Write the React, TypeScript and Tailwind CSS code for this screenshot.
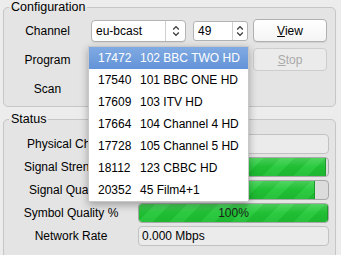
import React from "react";

function UpDown({ className = "" }: { className?: string }) {
  return (
    <svg width="8" height="12" viewBox="0 0 8 12" className={className}>
      <path d="M1.2 4.5 L4 1.7 L6.8 4.5" fill="none" stroke="#333" strokeWidth="1.2" />
      <path d="M1.2 7.5 L4 10.3 L6.8 7.5" fill="none" stroke="#333" strokeWidth="1.2" />
    </svg>
  );
}

const rows: [string, string][] = [
  ["17472", "102 BBC TWO HD"],
  ["17540", "101 BBC ONE HD"],
  ["17609", "103 ITV HD"],
  ["17664", "104 Channel 4 HD"],
  ["17728", "105 Channel 5 HD"],
  ["18112", "123 CBBC HD"],
  ["20352", "45 Film4+1"],
];

function Bar({ pct, label }: { pct: number; label?: string }) {
  return (
    <div className="relative h-[20px] w-[191px] rounded-[4px] border border-[#a8a8a8] bg-[#dcdcdc] overflow-hidden">
      <div
        className="h-full rounded-l-[3px] border-r border-[#1d9a2b] bg-[linear-gradient(180deg,rgba(255,255,255,0.18)_0%,rgba(255,255,255,0)_50%,rgba(0,0,0,0.05)_100%),repeating-linear-gradient(135deg,#1fbf33_0px,#1fbf33_12px,#2bcb40_12px,#2bcb40_22px)]"
        style={{ width: `${pct}%` }}
      />
      {label && (
        <div className="absolute inset-0 flex items-center justify-center text-[12px] text-[#1c1c1c]">{label}</div>
      )}
    </div>
  );
}

export default function App() {
  return (
    <div className="relative w-[341px] h-[255px] overflow-hidden bg-[#ececec] text-[12px] text-black font-['Liberation_Sans',Arial,sans-serif]">
      <fieldset className="ml-[3px] w-[333px] rounded-[5px] border border-[#c6c6c6] bg-[#e4e4e4] p-0">
        <legend className="ml-[5px] px-[2px] leading-[14px] text-[12.5px]">Configuration</legend>
        <div className="pt-[5px] pb-[6px] flex flex-col gap-[6px]">
          <div className="flex h-[23px] items-center">
            <div className="w-[87px] text-center">Channel</div>
            <div className="flex h-[22px] w-[95px] items-center rounded-[4px] border border-[#b3b3b3] bg-white shadow-[0_1px_0_rgba(0,0,0,0.06)]">
              <div className="flex-1 pl-[4px]">eu-bcast</div>
              <div className="flex h-full w-[20px] items-center justify-center border-l border-[#d0d0d0]">
                <UpDown />
              </div>
            </div>
            <div className="ml-[7px] flex h-[20px] w-[55px] items-center rounded-[3px] border border-[#b3b3b3] bg-white">
              <div className="flex-1 pl-[4px]">49</div>
              <div className="flex h-full w-[15px] items-center justify-center border-l border-[#d0d0d0]">
                <UpDown />
              </div>
            </div>
            <div className="ml-[5px] flex h-[23px] w-[74px] items-center justify-center rounded-[4px] border border-[#b0b0b0] bg-[linear-gradient(180deg,#ffffff,#f4f4f4)] shadow-[0_1px_0_rgba(0,0,0,0.08)]">
              <span><span className="underline">V</span>iew</span>
            </div>
          </div>
          <div className="flex h-[23px] items-center">
            <div className="w-[87px] text-center">Program</div>
            <div className="ml-[162px] flex h-[23px] w-[74px] items-center justify-center rounded-[4px] border border-[#cdcdcd] bg-[#ebebeb] text-[#a9a9a9]">
              <span><span className="underline">S</span>top</span>
            </div>
          </div>
          <div className="flex h-[23px] items-center">
            <div className="w-[87px] text-center">Scan</div>
          </div>
        </div>
      </fieldset>

      <fieldset className="mt-[5px] ml-[3px] h-[200px] w-[333px] rounded-[5px] border border-[#c6c6c6] bg-[#e4e4e4] p-0">
        <legend className="ml-[5px] px-[2px] leading-[14px] text-[12.5px]">Status</legend>
        <div className="pt-[8px] flex flex-col gap-[3px]">
          <div className="flex h-[20px] items-center">
            <div className="w-[134px] pl-[23px] whitespace-nowrap">Physical Ch</div>
            <div className="h-[20px] w-[191px] rounded-[4px] border border-[#c2c2c2] bg-[#ebebeb]" />
          </div>
          <div className="flex h-[20px] items-center">
            <div className="w-[134px] pl-[20px] whitespace-nowrap">Signal Stren</div>
            <Bar pct={99} />
          </div>
          <div className="flex h-[20px] items-center">
            <div className="w-[134px] pl-[25px] whitespace-nowrap">Signal Qual</div>
            <Bar pct={93} />
          </div>
          <div className="flex h-[20px] items-center">
            <div className="w-[134px] text-center whitespace-nowrap">Symbol Quality %</div>
            <Bar pct={100} label="100%" />
          </div>
          <div className="flex h-[20px] items-center">
            <div className="w-[134px] text-center whitespace-nowrap">Network Rate</div>
            <div className="flex h-[20px] w-[191px] items-center rounded-[4px] border border-[#c2c2c2] bg-[#ebebeb] pl-[3px]">
              0.000 Mbps
            </div>
          </div>
        </div>
      </fieldset>

      <div className="absolute left-[88px] top-[46px] w-[161px] border border-[#c8c8c8] bg-white shadow-[0_3px_8px_rgba(0,0,0,0.3)]">
        {rows.map(([n, name], i) => (
          <div
            key={n}
            className={
              i === 0
                ? "flex h-[22px] items-center pl-[9px] text-white bg-[linear-gradient(180deg,#80aae2,#6393d8)]"
                : "flex h-[22px] items-center pl-[9px] text-black"
            }
          >
            <span className="w-[42px]">{n}</span>
            <span>{name}</span>
          </div>
        ))}
      </div>
    </div>
  );
}
